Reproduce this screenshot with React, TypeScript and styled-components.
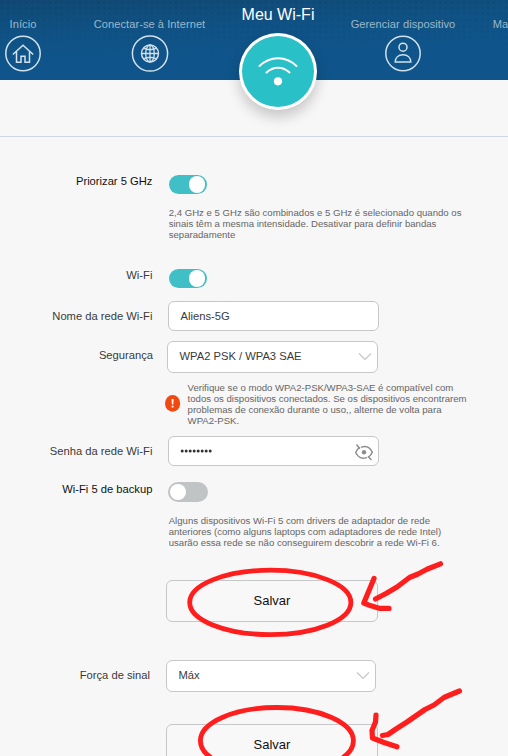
import React from 'react';
import styled, { createGlobalStyle } from 'styled-components';

const GlobalStyle = createGlobalStyle`
  * { box-sizing: border-box; }
  body { margin: 0; background: #f7f7f7; font-family: "Liberation Sans", Arial, sans-serif; }
`;

const Page = styled.div`
  position: relative;
  width: 508px;
  height: 756px;
  overflow: hidden;
  background: #f7f7f7;
`;

const Header = styled.header`
  display: flex;
  height: 80px;
  background:
    linear-gradient(180deg, transparent 0%, #0f558b 85%),
    radial-gradient(circle at 2px 2px, rgba(4, 44, 84, 0.2) 0.6px, transparent 1.6px) 0 0 / 6px 6px,
    linear-gradient(175deg, #114872 0%, #0f5080 40%, #0f558b 72%, #105d96 100%);
`;

const NavItem = styled.div<{ $width: number; $gap?: number }>`
  display: flex;
  flex: none;
  flex-direction: column;
  align-items: center;
  width: ${(p) => p.$width}px;
  margin-left: ${(p) => p.$gap ?? 0}px;
  padding-top: 17px;
`;

const NavLabel = styled.span`
  flex: none;
  height: 18px;
  line-height: 14px;
  font-size: 11.1px;
  letter-spacing: 0.05px;
  white-space: nowrap;
  color: #9bb8cc;
`;

const ActiveItem = styled(NavItem)`
  padding-top: 5px;
`;

const ActiveLabel = styled.span`
  flex: none;
  height: 28px;
  line-height: 19px;
  font-size: 16px;
  white-space: nowrap;
  color: #fff;
`;

const NavIcon = styled.svg`
  flex: none;
  width: 38px;
  height: 38px;
  fill: none;
  stroke: #d2e1eb;
  stroke-width: 1.5;
`;

const ActiveCircle = styled.div`
  flex: none;
  width: 78px;
  height: 77px;
  border: 3px solid #fff;
  border-radius: 50%;
  background: #2ac0c8;
  box-shadow: 0 7px 14px rgba(0, 0, 0, 0.2);
`;

const WifiIcon = styled.svg`
  display: block;
  width: 72px;
  height: 71px;
  fill: none;
  stroke: #fff;
  stroke-width: 2;
  stroke-linecap: round;
`;

const SubBar = styled.div`
  height: 57px;
  border-bottom: 1px solid #d0d6df;
`;

const Form = styled.main`
  display: flex;
  flex-direction: column;
`;

const Row = styled.div<{ $before: number; $inset?: number }>`
  display: grid;
  grid-template-columns: 153px 1fr;
  column-gap: ${(p) => p.$inset ?? 15}px;
  align-items: start;
  margin-top: ${(p) => p.$before}px;
`;

const Label = styled.label<{ $drop: number; $dark?: boolean; $end?: number }>`
  margin-top: ${(p) => p.$drop}px;
  padding-right: ${(p) => p.$end ?? 0.6}px;
  height: 14px;
  line-height: 14px;
  font-size: 11.2px;
  text-align: right;
  white-space: nowrap;
  color: ${(p) => (p.$dark ? '#111' : '#3a3a3a')};
`;

const Toggle = styled.div<{ $on: boolean }>`
  display: flex;
  align-items: center;
  justify-content: ${(p) => (p.$on ? 'flex-end' : 'flex-start')};
  width: ${(p) => (p.$on ? 38.5 : 39.7)}px;
  height: ${(p) => (p.$on ? 19.5 : 20)}px;
  margin-left: ${(p) => (p.$on ? 0.6 : 0.3)}px;
  padding: 0 1.8px;
  border-radius: 10px;
  background: ${(p) => (p.$on ? '#41bfc6' : '#c0c4c5')};
`;

const Knob = styled.span`
  width: 16.2px;
  height: 16.2px;
  border-radius: 50%;
  background: #fff;
`;

const Help = styled.p<{ $before: number }>`
  margin: ${(p) => p.$before}px 0 0 168.7px;
  font-size: 9.6px;
  line-height: 11px;
  white-space: nowrap;
  color: #666;
`;

const Notice = styled.div`
  display: flex;
  align-items: center;
  gap: 6.6px;
  margin: 9px 0 0 165px;
`;

const NoticeText = styled(Help)`
  margin: 0;
`;

const AlertIcon = styled.svg`
  flex: none;
  width: 16px;
  height: 17px;
`;

const Field = styled.div<{ $width?: number; $height?: number }>`
  display: flex;
  align-items: center;
  justify-content: space-between;
  width: ${(p) => p.$width ?? 211}px;
  height: ${(p) => p.$height ?? 30}px;
  padding: 0 4px 0 11.5px;
  border: 1px solid #c5c7c8;
  border-radius: 6px;
  background: #fff;
  font-size: 11.2px;
  color: #3a3a3a;
`;

const SelectValue = styled.span`
  padding-bottom: 2px;
`;

const Dots = styled.svg`
  width: 32px;
  height: 6px;
  margin-left: -1px;
  fill: #333;
`;

const Chevron = styled.svg`
  width: 14px;
  height: 9px;
  margin-right: 1px;
  fill: none;
  stroke: #c3c5c6;
  stroke-width: 1.1;
`;

const EyeIcon = styled.svg`
  width: 20px;
  height: 18px;
  margin-top: 2px;
  fill: none;
  stroke: #8d8d8d;
  stroke-width: 1.5;
  stroke-linecap: round;
`;

const SaveButton = styled.button<{ $before: number }>`
  width: 212px;
  height: 42px;
  margin: ${(p) => p.$before}px 0 0 166px;
  padding: 0;
  border: 1px solid #c5c7c8;
  border-radius: 6px;
  background: #f8f8f8;
  font-family: inherit;
  font-size: 13px;
  line-height: 40px;
  color: #111;
`;

const Markup = styled.svg`
  position: absolute;
  inset: 0;
  pointer-events: none;
  fill: none;
  stroke: #ff1e1e;
  stroke-width: 4.8;
  stroke-linecap: round;
  stroke-linejoin: round;
`;

function Down() {
  return (
    <Chevron viewBox="0 0 14 9">
      <path d="M1 1.5 7 7.5 13 1.5" />
    </Chevron>
  );
}

export default function App() {
  return (
    <>
      <GlobalStyle />
      <Page>
        <Header>
          <NavItem $width={46}>
            <NavLabel>Início</NavLabel>
            <NavIcon viewBox="0 0 38 38">
              <circle cx="19" cy="18.5" r="17.2" />
              <path d="M8.8 19.5 19 10.2 29.2 19.5M12.5 16.8V27.3H17V21.2H21V27.3H25.5V16.8" />
            </NavIcon>
          </NavItem>
          <NavItem $width={157} $gap={25}>
            <NavLabel>Conectar-se à Internet</NavLabel>
            <NavIcon viewBox="0 0 38 38">
              <circle cx="19" cy="18.5" r="17.6" />
              <circle cx="19" cy="18.5" r="8.5" />
              <ellipse cx="19" cy="18.5" rx="4.3" ry="8.5" strokeWidth="1.3" />
              <path d="M10.5 18.5H27.5M19 10V27M12.5 13.2Q19 16.3 25.5 13.2M12.5 23.8Q19 20.7 25.5 23.8" strokeWidth="1.3" />
            </NavIcon>
          </NavItem>
          <ActiveItem $width={100}>
            <ActiveLabel>Meu Wi-Fi</ActiveLabel>
            <ActiveCircle>
              <WifiIcon viewBox="0 0 72 71">
                <path d="M17.5 30C28 19.5 44 19.5 54.5 30M24.5 36.5C31 30 41 30 47.5 36.5" />
                <circle cx="36" cy="45.3" r="4.1" fill="#fff" stroke="none" />
              </WifiIcon>
            </ActiveCircle>
          </ActiveItem>
          <NavItem $width={150}>
            <NavLabel>Gerenciar dispositivo</NavLabel>
            <NavIcon viewBox="0 0 38 38">
              <circle cx="19" cy="18.5" r="17.2" />
              <circle cx="19" cy="12.2" r="4" />
              <path d="M11.2 27.1C11.2 22.5 14.5 19.8 19 19.8S26.8 22.5 26.8 27.1Z" />
            </NavIcon>
          </NavItem>
          <NavItem $width={15} $gap={15}>
            <NavLabel>Ma</NavLabel>
          </NavItem>
        </Header>
        <SubBar />
        <Form>
          <Row $before={37.8}>
            <Label $drop={-1} $dark>Priorizar 5 GHz</Label>
            <Toggle $on><Knob /></Toggle>
          </Row>
          <Help $before={12.5}>
            2,4 GHz e 5 GHz são combinados e 5 GHz é selecionado quando os<br />
            sinais têm a mesma intensidade. Desativar para definir bandas<br />
            separadamente
          </Help>
          <Row $before={28.9}>
            <Label $drop={-1}>Wi-Fi</Label>
            <Toggle $on><Knob /></Toggle>
          </Row>
          <Row $before={12.8}>
            <Label $drop={8}>Nome da rede Wi-Fi</Label>
            <Field>Aliens-5G</Field>
          </Row>
          <Row $before={10} $inset={14}>
            <Label $drop={7} $end={0}>Segurança</Label>
            <Field $height={32}><SelectValue>WPA2 PSK / WPA3 SAE</SelectValue><Down /></Field>
          </Row>
          <Notice>
            <AlertIcon viewBox="0 0 16 17">
              <ellipse cx="7.6" cy="8.4" rx="7.6" ry="8.3" fill="#f24910" />
              <path d="M6.5 4H8.7L8.3 9.5H6.9ZM6.7 10.8H8.5V12.6H6.7Z" fill="#fff" />
            </AlertIcon>
            <NoticeText $before={0}>
              Verifique se o modo WPA2-PSK/WPA3-SAE é compatível com<br />
              todos os dispositivos conectados. Se os dispositivos encontrarem<br />
              problemas de conexão durante o uso,, alterne de volta para<br />
              WPA2-PSK.
            </NoticeText>
          </Notice>
          <Row $before={10}>
            <Label $drop={8}>Senha da rede Wi-Fi</Label>
            <Field>
              <Dots viewBox="0 0 32 6">
                {Array.from({ length: 8 }, (_, i) => (
                  <circle key={i} cx={2.2 + i * 4} cy="3" r="1.5" />
                ))}
              </Dots>
              <EyeIcon viewBox="0 0 20 18">
                <path d="M7.5 4.1C12 2.6 16 4.3 18.3 9.3C17.4 11.4 16.1 13 14.5 14M12.5 14.6C8 16.1 4 14.3 1.7 9.5C2.5 7.4 3.8 5.7 5.5 4.7M2.8 2 5.5 5.2M14.5 14 17 16.5" />
                <circle cx="10" cy="9.3" r="2.2" fill="#8d8d8d" stroke="none" />
              </EyeIcon>
            </Field>
          </Row>
          <Row $before={15.8}>
            <Label $drop={0} $dark>Wi-Fi 5 de backup</Label>
            <Toggle $on={false}><Knob /></Toggle>
          </Row>
          <Help $before={13}>
            Alguns dispositivos Wi-Fi 5 com drivers de adaptador de rede<br />
            anteriores (como alguns laptops com adaptadores de rede Intel)<br />
            usarão essa rede se não conseguirem descobrir a rede Wi-Fi 6.
          </Help>
          <SaveButton $before={32.2}>Salvar</SaveButton>
          <Row $before={38} $inset={13}>
            <Label $drop={8} $end={3}>Força de sinal</Label>
            <Field $width={210} $height={32}><SelectValue>Máx</SelectValue><Down /></Field>
          </Row>
          <SaveButton $before={32}>Salvar</SaveButton>
        </Form>
        <Markup width="508" height="756" viewBox="0 0 508 756">
          <ellipse cx="270.3" cy="602.4" rx="80.6" ry="32.2" />
          <path strokeWidth="5.2" d="M440.5 563.8 427.5 569 418 574 409.5 577.5 397 587 386 593.5 375.5 599M374 578.5 363.8 603 371 605.8 380 608.4H389" />
          <ellipse cx="276.9" cy="740.7" rx="76.5" ry="33.2" />
          <path strokeWidth="5.2" d="M459.5 691 451 694.5 444 697.5 434 705 425 709.5 407 722 396 729 388 734.5 382.5 735.5M376 715 375.5 722 372 730.5 372.5 738 384 742.5 397 746.8" />
        </Markup>
      </Page>
    </>
  );
}
